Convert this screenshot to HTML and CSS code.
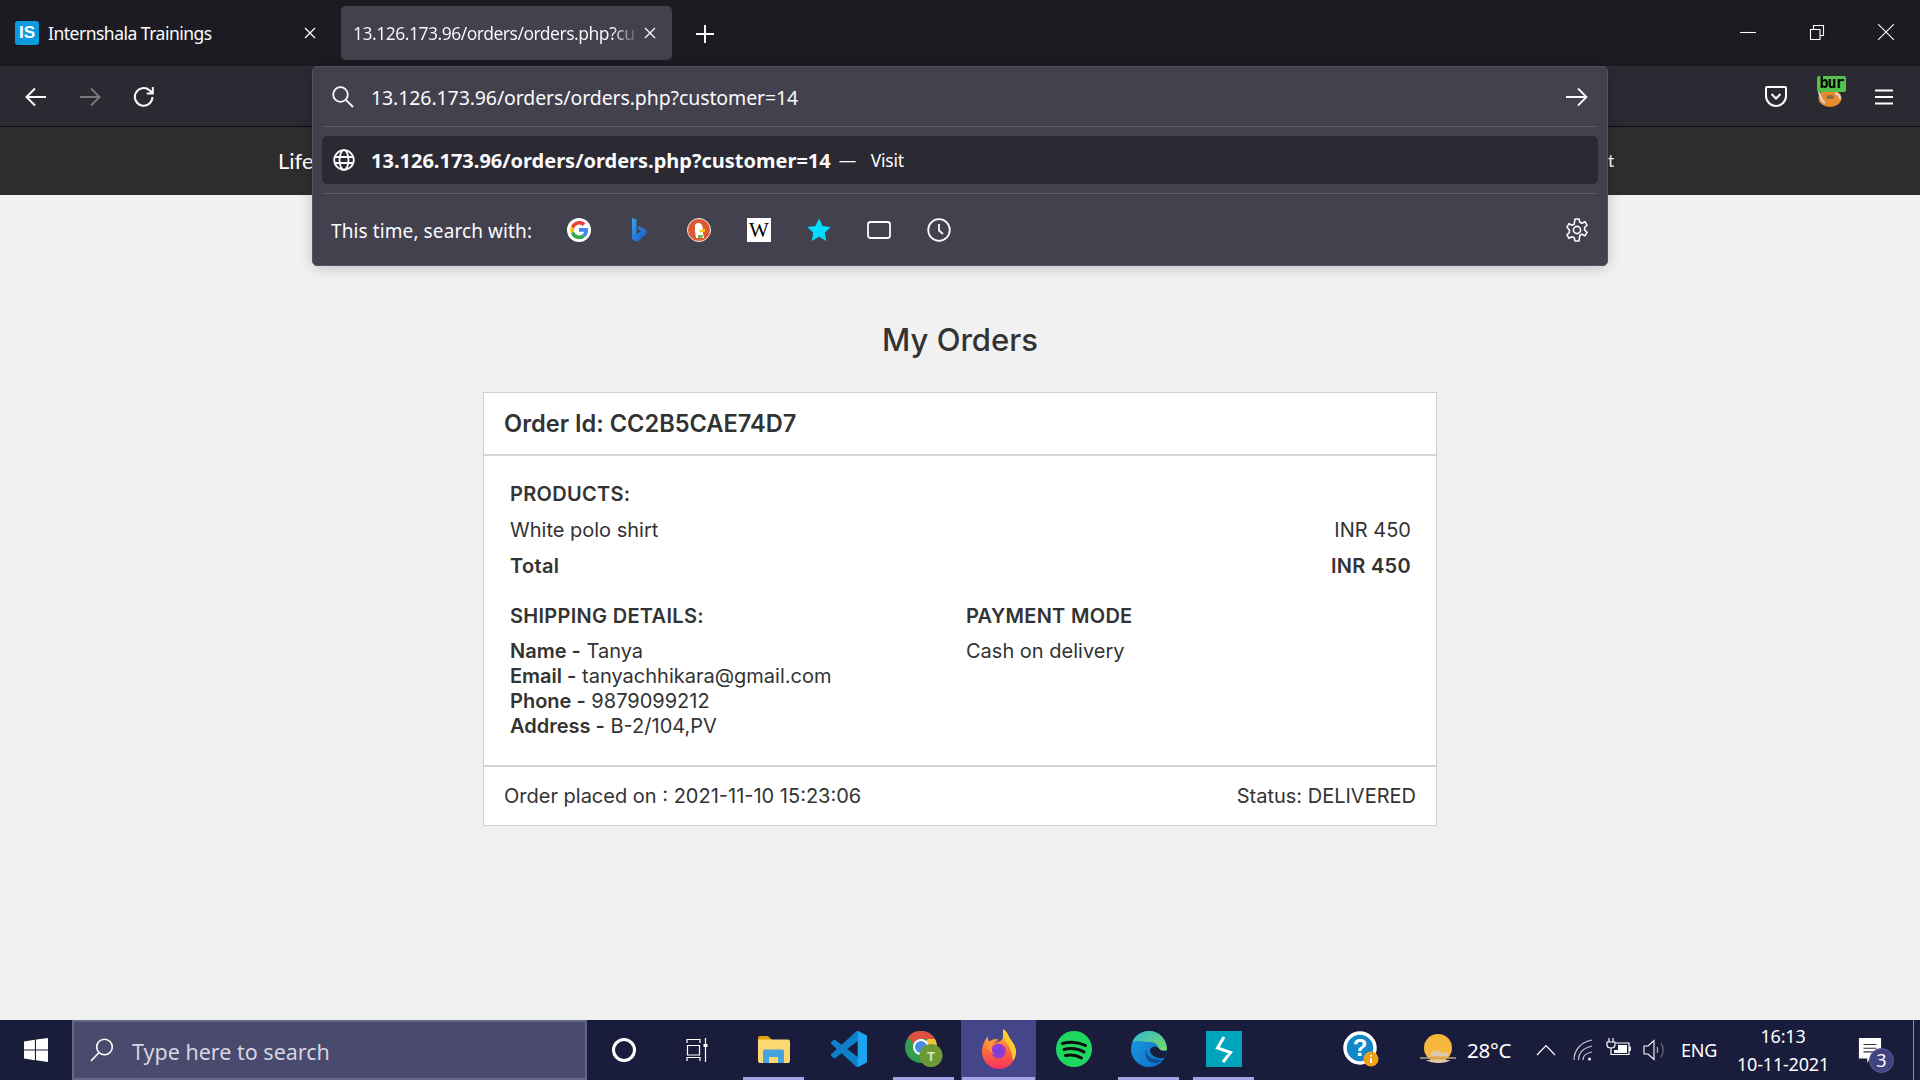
FILE: index.html
```html
<!DOCTYPE html>
<html lang="en">
<head>
<meta charset="utf-8">
<title>My Orders</title>
<link rel="stylesheet" href="styles.css">
</head>
<body>
<div class="screen">
  <div class="tabbar">
    <div class="tab">
      <span class="is-logo">IS</span>
      <span class="tab-title">Internshala Trainings</span>
      <svg class="tab-x" viewBox="0 0 12 12"><path d="M1 1l10 10M11 1L1 11"/></svg>
    </div>
    <div class="tab tab-active">
      <span class="tab-title tab-fade">13.126.173.96/orders/orders.php?cu</span>
      <svg class="tab-x" viewBox="0 0 12 12"><path d="M1 1l10 10M11 1L1 11"/></svg>
    </div>
    <svg class="new-tab" viewBox="0 0 18 18"><path d="M9 0v18M0 9h18"/></svg>
    <div class="win-controls">
      <svg class="win-btn" viewBox="0 0 16 16"><path d="M0 8.500h16"/></svg>
      <svg class="win-btn" viewBox="0 0 16 16"><path d="M1.500 5.500h9.500v10H1.500zM4.500 5.500V1.500h10v10H11"/></svg>
      <svg class="win-btn" viewBox="0 0 16 16"><path d="M0 0l16 16M16 0L0 16"/></svg>
    </div>
  </div>

  <div class="toolbar">
    <div class="nav-group">
      <svg class="tool-icon" viewBox="0 0 22 22"><path d="M21 11H2M10 2.500 1.500 11l8.500 8.500"/></svg>
      <svg class="tool-icon tool-dim" viewBox="0 0 22 22"><path d="M1 11h19M12 2.500l8.500 8.500-8.500 8.500"/></svg>
      <svg class="tool-icon" viewBox="0 0 22 22"><path d="M19.500 11a8.800 8.800 0 1 1-3-6.700L19.500 7M19.800 1V7.500h-6"/></svg>
    </div>
    <div class="tool-right">
      <svg class="pocket" viewBox="0 0 22 24"><path d="M2 2h18a1 1 0 0 1 1 1v8a10 10 0 0 1-20 0V3a1 1 0 0 1 1-1z"/><path d="M6.500 9l4.500 4.500L15.500 9"/></svg>
      <div class="burp">
        <svg class="burp-fox" viewBox="0 0 24 16"><ellipse cx="12" cy="7" rx="11.500" ry="9" fill="#e98a2e"/><path d="M1 1c1 5 3 9 6 11M17 2c3 1 5 3 5 6" stroke="#d8d8d8" stroke-width="2" fill="none"/><ellipse cx="12" cy="6" rx="4" ry="2" fill="#8a6a4a"/></svg>
        <span class="burp-tag">bur</span>
      </div>
      <svg class="menu-icon" viewBox="0 0 18 16"><path d="M0 1.500h18M0 8h18M0 14.500h18"/></svg>
    </div>
  </div>

  <div class="site-header"><span class="site-link">Life</span><span class="site-link site-link-end">t</span></div>

  <main class="page">
    <h1 class="page-title">My Orders</h1>
    <section class="card">
      <header class="card-head">Order Id: CC2B5CAE74D7</header>
      <div class="card-body">
        <div class="line strong"><span>PRODUCTS:</span></div>
        <div class="line"><span>White polo shirt</span><span>INR 450</span></div>
        <div class="line strong"><span>Total</span><span>INR 450</span></div>
        <div class="details">
          <div>
            <div class="line strong">SHIPPING DETAILS:</div>
            <div class="address">
              <div><b>Name -</b> Tanya</div>
              <div><b>Email -</b> tanyachhikara@gmail.com</div>
              <div><b>Phone -</b> 9879099212</div>
              <div><b>Address -</b> B-2/104,PV</div>
            </div>
          </div>
          <div>
            <div class="line strong">PAYMENT MODE</div>
            <div class="address">Cash on delivery</div>
          </div>
        </div>
      </div>
      <footer class="card-foot"><span>Order placed on : 2021-11-10 15:23:06</span><span>Status: DELIVERED</span></footer>
    </section>
  </main>

  <div class="taskbar">
    <div class="start">
      <svg class="win-logo" viewBox="0 0 24 24"><path d="M0 3.400l10.900-1.600v9.700H0zM12 1.600L24 0v11.500H12zM0 12.500h10.900v9.700L0 20.600zM12 12.500h12V24l-12-1.700z"/></svg>
    </div>
    <div class="search">
      <svg class="search-glass" viewBox="0 0 24 24"><circle cx="14.500" cy="9" r="7.800"/><path d="M9 14.500 1 23"/></svg>
      <span>Type here to search</span>
    </div>
    <div class="slot slot-cortana"><span class="cortana"></span></div>
    <div class="slot slot-view">
      <svg class="taskview" viewBox="0 0 26 24"><path d="M1 5V1.500h13V5M1.500 7.500h12v9.500h-12zM1 23v-3.500h13V23M19.500 0v24"/><path class="tv-dot" d="M17.500 6h4v3h-4z"/></svg>
    </div>

    <div class="slot pinned on">
      <svg class="app-folder" viewBox="0 0 32 27"><path d="M0 2a2 2 0 0 1 2-2h8l4 4H0z" fill="#e0a008"/><path d="M0 3.500h30a2 2 0 0 1 2 2V25a2 2 0 0 1-2 2H2a2 2 0 0 1-2-2z" fill="#fbd872"/><path d="M5 27V15a1.500 1.500 0 0 1 1.500-1.500h18A1.500 1.500 0 0 1 26 15v12h-6v-6h-9v6z" fill="#45a3de"/></svg>
    </div>
    <div class="slot pinned">
      <svg class="app" viewBox="0 0 24 24"><path d="M23.150 2.587L18.210.21a1.494 1.494 0 0 0-1.705.29l-9.460 8.630-4.120-3.128a.999.999 0 0 0-1.276.057L.327 7.261A1 1 0 0 0 .326 8.740L3.899 12 .326 15.260a1 1 0 0 0 .001 1.479L1.650 17.940a.999.999 0 0 0 1.276.057l4.120-3.128 9.460 8.630a1.492 1.492 0 0 0 1.704.290l4.942-2.377A1.500 1.500 0 0 0 24 20.060V3.939a1.500 1.500 0 0 0-.850-1.352zm-5.146 14.861L10.826 12l7.178-5.448v10.896z" fill="#0f80cc"/><path d="M18.210.21 23.150 2.587A1.500 1.500 0 0 1 24 3.939V20.060a1.500 1.500 0 0 1-.850 1.352l-4.940 2.377a1.500 1.500 0 0 1-1.700-.29c.6.3 1.300 0 1.300-.9V1c0-.9-.7-1.200-1.300-.5a1.500 1.500 0 0 1 1.700-.29z" fill="#20a4f0"/></svg>
    </div>
    <div class="slot pinned on">
      <svg class="app-chrome" viewBox="0 0 38 36"><circle cx="16" cy="16" r="16" fill="#2f9e50"/><path d="M16 0a16 16 0 0 1 14 8H16a8 8 0 0 0-7.500 5L3 6a16 16 0 0 1 13-6z" fill="#de5140"/><path d="M30 8a16 16 0 0 1-7 22l-7-14 7-8z" fill="#f5c33b"/><circle cx="16" cy="16" r="8" fill="#fff"/><circle cx="16" cy="16" r="6" fill="#4a8be8"/><circle cx="26" cy="24.500" r="11.500" fill="#6d9a35"/><text class="chrome-t" x="26" y="29.500">T</text></svg>
    </div>
    <div class="slot pinned on active">
      <svg class="app-fox" viewBox="0 0 36 42">
        <defs>
          <linearGradient id="fx" x1="0" y1="0" x2="0" y2="1"><stop offset="0" stop-color="#ffc93b"/><stop offset=".5" stop-color="#ff7139"/><stop offset="1" stop-color="#f5305f"/></linearGradient>
          <radialGradient id="fxc"><stop offset="0" stop-color="#6a3fe0"/><stop offset="1" stop-color="#a83bc8"/></radialGradient>
        </defs>
        <path d="M22 1c5 4 4 7 7 10 4 4 6 9 6 13a17 17 0 0 1-34 0C1 18 3 13 7 8c-.5 3 .5 5 2 6 2-3 6-4 9-2-2 0-4 1-5 3 6-1 9-3 9-7 0-3 0-5 0-7z" fill="url(#fx)"/>
        <circle cx="17.500" cy="23" r="7.500" fill="url(#fxc)"/>
        <path d="M6 15c3-3 8-4 12-2-3 0-6 1-7 5-1 3 0 6 2 8-4-1-7-6-7-11z" fill="#ff9640"/>
        <path d="M22 1c6 4 5 7 8 11 3 4 5 8 5 12 0 3-1 6-3 9-1-8-3-14-7-19-3-4-3-9-3-13z" fill="#ffcb2f"/>
      </svg>
    </div>
    <div class="slot pinned">
      <svg class="app" viewBox="0 0 36 36"><circle cx="18" cy="18" r="18" fill="#1ed760"/><path d="M6.500 12.500c7-2 16-1.500 23 2M8 18.500c6-1.500 14-1 20 2.500M9.500 24.500c5-1 11-.5 16 2.500" stroke="#0d0d0d" stroke-width="3" stroke-linecap="round" fill="none"/></svg>
    </div>
    <div class="slot pinned on">
      <svg class="app" viewBox="0 0 36 36">
        <defs>
          <linearGradient id="eg" x1="0" y1="0" x2="1" y2="1"><stop offset="0" stop-color="#2db8d8"/><stop offset="1" stop-color="#7bdc5c"/></linearGradient>
          <linearGradient id="eb" x1="0" y1="0" x2="1" y2="1"><stop offset="0" stop-color="#1b9de2"/><stop offset="1" stop-color="#0c6cc0"/></linearGradient>
        </defs>
        <circle cx="18" cy="18" r="18" fill="url(#eb)"/>
        <path d="M1.500 11C4 4 11 0 18 0c10 0 18 8 18 19-2 1-6 1-8-1-1-5-5-7-9-7-7 0-13-2-17.500 0z" fill="url(#eg)"/>
        <path d="M36 19.500c-4 1-7 0-8-2-3-3-9-2-9 2 0 3 3 6 7 7 3 1 6 1 8 0z" fill="#1a1c3c"/>
        <path d="M31 30c-5 3-12 3-15-2-2-3-2-7-1-10 0 5 3 9 8 10 3 .5 6 .5 8 2z" fill="#0b4f98"/>
      </svg>
    </div>
    <div class="slot pinned on">
      <svg class="bolt-box" viewBox="0 0 36 36"><path d="M18 6l-6.500 11 13 4.500L17 31"/></svg>
    </div>

    <div class="tray">
      <div class="help"><svg viewBox="0 0 36 38"><circle cx="17" cy="17" r="15" fill="#1186c9" stroke="#fff" stroke-width="3.500"/><text class="help-q" x="17" y="25">?</text><circle cx="28" cy="28" r="7.500" fill="#f0a116"/><path d="M28 24v1.500M28 27v5" stroke="#fff" stroke-width="2"/></svg></div>
      <div class="weather"><svg viewBox="0 0 36 34"><circle cx="18" cy="15" r="14" fill="#f6b73c"/><path d="M0 25h36" stroke="#b9a38a" stroke-width="1.500"/><path d="M10 23c1-5 8-7 12-3 3-2 7 0 7 3zM6 27h24c-3 4-19 4-24 0z" fill="#dcc8ae"/></svg></div>
      <span class="temp">28°C</span>
      <svg class="chev" viewBox="0 0 20 12"><path d="M1 11l9-9.500L19 11"/></svg>
      <svg class="wifi" viewBox="0 0 20 22"><path d="M1 21C1 11 8 3 19 1M5.500 21c0-7 5-12 13.500-14M10 21c0-4 3-7 9-8"/><circle cx="16.500" cy="20" r="1.500" fill="#fff" stroke="none"/></svg>
      <svg class="batt" viewBox="0 0 26 18"><path d="M4 0v4M8 0v4M2 4h8v3c0 2-2 3-4 3S2 9 2 7zM6 10v6.500h18V5H11M25.200 8.500v4.500"/><path class="batt-fill" d="M9 12h13v3H9zM13 7h9v5h-9z"/></svg>
      <svg class="speaker" viewBox="0 0 24 22"><path d="M1 7h4l6-5.500v19L5 15H1z"/><path class="faint" d="M14 8c1 2 1 4 0 6"/><path class="fainter" d="M18 4c3 4 3 10 0 14"/></svg>
      <span class="lang">ENG</span>
      <div class="clock"><span>16:13</span><span>10-11-2021</span></div>
      <div class="notif">
        <svg viewBox="0 0 26 30"><path d="M1 1h24v22H13l-3 5v-5H1z" fill="#fff"/><path d="M6 8h14M6 12h14M6 16h10" stroke="#333" stroke-width="1.200"/></svg>
        <span class="notif-badge">3</span>
      </div>
      <span class="show-desktop"></span>
    </div>
  </div>

  <div class="urlbar">
    <div class="url-input">
      <svg class="pop-icon" viewBox="0 0 22 22"><circle cx="8.500" cy="8.500" r="7.300"/><path d="M14 14l7 7"/></svg>
      <span class="url-text">13.126.173.96/orders/orders.php?customer=14</span>
      <svg class="pop-icon" viewBox="0 0 22 22"><path d="M0 11h20M12 2.500l8.500 8.500-8.500 8.500"/></svg>
    </div>
    <div class="url-result">
      <svg class="pop-icon" viewBox="0 0 22 22"><circle cx="11" cy="11" r="9.800"/><ellipse cx="11" cy="11" rx="4.500" ry="9.800"/><path d="M1.500 8h19M1.500 14h19"/></svg>
      <b class="url-text">13.126.173.96/orders/orders.php?customer=14</b>
      <span class="url-visit">— &nbsp;Visit</span>
    </div>
    <div class="url-engines">
      <span class="engine-label">This time, search with:</span>
      <div class="engine-list">
        <span class="engine"><svg viewBox="0 0 24 24"><circle cx="12" cy="12" r="12" fill="#fff"/><path d="M12 6.500a5.500 5.500 0 0 1 3.700 1.400l2.700-2.700A9.300 9.300 0 0 0 4 8.200l3.200 2.500A5.500 5.500 0 0 1 12 6.500z" fill="#ea4335"/><path d="M7 13.500a5.500 5.500 0 0 1 .2-2.800L4 8.200a9.500 9.500 0 0 0 0 7.600z" fill="#fbbc05"/><path d="M12 21.300a9 9 0 0 0 6.200-2.300l-3-2.400a5.500 5.500 0 0 1-8.200-3.100L4 15.800a9.300 9.300 0 0 0 8 5.500z" fill="#34a853"/><path d="M21 12c0-.7 0-1.300-.2-2H12v3.800h5.200a4.500 4.500 0 0 1-2 2.800l3 2.400A9 9 0 0 0 21 12z" fill="#4285f4"/></svg></span>
        <span class="engine"><svg viewBox="0 0 24 24"><defs><linearGradient id="bg" x1="0" y1="0" x2="1" y2="1"><stop offset="0" stop-color="#36a4e8"/><stop offset="1" stop-color="#1c53c6"/></linearGradient></defs><path d="M5 0l4.500 1.500v14.500l5-3-3-1.500-1-3.500 9 3.500v4.500L10 24l-5-3z" fill="url(#bg)"/></svg></span>
        <span class="engine"><svg viewBox="0 0 24 24"><circle cx="12" cy="12" r="11.500" fill="#de5833" stroke="#eee" stroke-width="1"/><path d="M8 7c2-3 6-2 7 0 1 3 1 6 1 8l1 5H9L8 13z" fill="#fff"/><path d="M12 12l6-1v2.500l-5 1z" fill="#fdd209"/><path d="M11 17l5 0-1 3h-4z" fill="#65bc46"/></svg></span>
        <span class="engine"><span class="wiki">W</span></span>
        <span class="engine"><svg viewBox="0 0 24 24"><path d="M12 .500l3.500 7.600 8.300 1-6.100 5.600 1.600 8.200-7.300-4.100-7.300 4.100 1.600-8.200L.2 9.100l8.300-1z" fill="#00ddff"/></svg></span>
        <span class="engine"><svg class="line-svg" viewBox="0 0 24 24"><rect x="1" y="4" width="22" height="16" rx="2.500"/></svg></span>
        <span class="engine"><svg class="line-svg" viewBox="0 0 24 24"><circle cx="12" cy="12" r="10.800"/><path d="M12 6v6.500l4 3.500"/></svg></span>
      </div>
      <svg class="gear" viewBox="0 0 24 24"><path d="M10 1h4l.8 3.200 2.200 1 3-1.500 2 3.500-2.400 2.300v2.500l2.400 2.300-2 3.500-3-1.500-2.200 1L14 23h-4l-.8-3.200-2.200-1-3 1.500-2-3.500 2.400-2.300V12L2 9.200l2-3.500 3 1.500 2.200-1z"/><circle cx="12" cy="12" r="3.600"/></svg>
    </div>
  </div>
</div>
</body>
</html>
```
FILE: styles.css
```css
* { box-sizing: border-box; }
html, body { margin: 0; height: 100%; }
body { font-family: "Noto Sans", sans-serif; background: #f1f1f1; }
svg { display: block; flex: none; }

.screen { position: relative; width: 1920px; height: 1080px; display: flex; flex-direction: column; overflow: hidden; }

/* tab strip */
.tabbar { height: 66px; background: #1c1b22; display: flex; align-items: flex-start; padding-top: 6px; color: #fbfbfe; flex: none; }
.tab { height: 54px; display: flex; align-items: center; font-size: 17.500px; letter-spacing: -.5px; position: relative; }
.tab:first-child { width: 341px; padding: 0 25px 0 15px; }
.tab-active { width: 331px; background: #42414d; border-radius: 5px; padding: 0 17px 0 12px; }
.is-logo { width: 24px; height: 24px; border-radius: 3px; background: #0a9bdf; color: #fff; font: 700 17px/24px "Liberation Sans", sans-serif; text-align: center; margin-right: 9px; flex: none; letter-spacing: 0; }
.tab-title { flex: 1; white-space: nowrap; overflow: hidden; }
.tab-fade { color: transparent; background: linear-gradient(90deg, #fbfbfe 92%, #6b6a75 100%); -webkit-background-clip: text; background-clip: text; flex: none; margin-right: 10px; }
.tab-x { width: 12px; height: 12px; stroke: #fbfbfe; stroke-width: 1.300; fill: none; }
.new-tab { width: 18px; height: 18px; stroke: #fbfbfe; stroke-width: 2; margin: 19px 0 0 24px; }
.win-controls { margin-left: auto; display: flex; gap: 53px; padding: 18px 26px 0 0; }
.win-btn { width: 16px; height: 16px; stroke: #fff; stroke-width: 1.100; fill: none; }

/* toolbar */
.toolbar { height: 61px; background: #2b2a33; border-bottom: 1px solid #0c0c0d; display: flex; align-items: center; justify-content: space-between; padding: 2px 27px 0 25px; flex: none; }
.nav-group { display: flex; gap: 32px; }
.tool-icon { width: 22px; height: 22px; stroke: #fbfbfe; stroke-width: 2; fill: none; }
.tool-dim { stroke: #77767c; }
.tool-right { display: flex; align-items: center; }
.pocket { width: 22px; height: 24px; stroke: #fbfbfe; stroke-width: 2; fill: none; margin-right: 30px; }
.burp { position: relative; width: 28px; height: 40px; margin-right: 30px; }
.burp-fox { position: absolute; left: 1px; top: 14px; width: 24px; height: 16px; }
.burp-tag { position: absolute; left: 0; top: -1px; width: 29px; height: 16px; background: #56c04e; border-radius: 2px; color: #000; font: 700 15px/15px "DejaVu Sans Mono", monospace; text-align: center; letter-spacing: -1px; }
.menu-icon { width: 18px; height: 16px; stroke: #fbfbfe; stroke-width: 2; }

/* site header */
.site-header { height: 68px; background: #2d2d2d; color: #fff; display: flex; align-items: center; justify-content: space-between; padding: 0 306px 2px 278px; font: 400 22px "Lato", sans-serif; flex: none; }
.site-link-end { font-size: 17px; }

/* page */
.page { flex: 1; padding-top: 124px; color: #333; font-family: "Inter", sans-serif; min-height: 0; }
.page-title { margin: 0 0 31px; text-align: center; font-size: 31px; line-height: 42px; font-weight: 500; color: #333; }
.card { width: 954px; height: 434px; margin: 0 auto; background: #fff; border: 1.500px solid #cfcfcf; display: flex; flex-direction: column; font-size: 20px; }
.card-head { height: 63px; border-bottom: 2px solid #d4d4d4; padding-left: 20px; display: flex; align-items: center; font-size: 23.600px; font-weight: 600; }
.card-body { flex: 1; padding: 20px 25px 0 26px; }
.line { height: 36px; display: flex; align-items: center; justify-content: space-between; }
.strong { font-weight: 600; letter-spacing: .3px; }
.address b { font-weight: 600; }
.details { display: grid; grid-template-columns: 456px 1fr; margin-top: 14px; }
.address { line-height: 25px; margin-top: 5px; }
.card-foot { height: 60px; border-top: 2px solid #d4d4d4; padding: 0 20px; display: flex; align-items: center; justify-content: space-between; }

/* taskbar */
.taskbar { height: 60px; background: #1a1c3c; display: flex; flex: none; color: #fff; font-family: "Noto Sans", sans-serif; }
.start { width: 72px; display: flex; align-items: center; justify-content: center; }
.win-logo { width: 24px; height: 24px; fill: #fff; }
.search { width: 515px; background: #4a4a6e; border: 2px solid #66668a; display: flex; align-items: center; padding: 3px 0 0 16px; font-size: 21.500px; color: #d6d6e2; }
.search-glass { width: 24px; height: 24px; stroke: #fff; stroke-width: 1.600; fill: none; margin: -3px 18px 0 0; }
.slot { display: flex; align-items: center; justify-content: center; position: relative; height: 60px; }
.slot-cortana { width: 74px; }
.slot-view { width: 75px; }
.cortana { width: 24px; height: 24px; border-radius: 50%; border: 3px solid #fff; }
.taskview { width: 26px; height: 24px; stroke: #fff; stroke-width: 1.200; fill: none; }
.tv-dot { fill: #fff; stroke: none; }
.pinned { width: 75px; padding-bottom: 2px; }
.pinned.on::after { content: ""; position: absolute; left: 7px; right: 7px; bottom: 0; height: 3px; background: #a3a3e6; }
.active { background: #45458a; }
.pinned.active::after { left: 1px; right: 1px; }
.app { width: 36px; height: 36px; }
.app-folder { width: 32px; height: 27px; }
.app-chrome { width: 38px; height: 36px; }
.app-fox { width: 36px; height: 42px; }
.chrome-t { font: 700 13px "Liberation Sans", sans-serif; fill: #d9e8c0; text-anchor: middle; }
.bolt-box { width: 36px; height: 36px; background: #00a5bd; stroke: #fff; stroke-width: 3; fill: none; }
.tray { margin-left: auto; display: flex; align-items: center; }
.help { width: 36px; height: 38px; margin-right: 41px; }
.help svg { width: 36px; height: 38px; }
.help-q { font: 700 24px "Liberation Sans", sans-serif; fill: #fff; text-anchor: middle; }
.weather { width: 36px; height: 34px; margin-right: 11px; }
.weather svg { width: 36px; height: 34px; }
.temp { font-size: 20.500px; letter-spacing: -.3px; margin-right: 25px; }
.chev { width: 20px; height: 12px; stroke: #fff; stroke-width: 1.200; fill: none; margin-right: 17px; }
.wifi { width: 20px; height: 22px; stroke: #c9c9d2; stroke-width: 1.200; fill: none; margin-right: 12px; }
.batt { width: 26px; height: 18px; stroke: #fff; stroke-width: 1.200; fill: none; margin: -6px 12px 0 0; }
.batt-fill { fill: #fff; stroke: none; }
.speaker { width: 24px; height: 22px; stroke: #fff; stroke-width: 1.100; fill: none; margin-right: 14px; }
.faint { stroke: #bbb; }
.fainter { stroke: #777; }
.lang { font-size: 18px; letter-spacing: -.3px; margin-right: 18px; }
.clock { display: flex; flex-direction: column; align-items: center; gap: 5px; font-size: 18px; line-height: 23px; width: 96px; margin-right: 27px; letter-spacing: -.2px; }
.notif { position: relative; width: 24px; height: 28px; margin-top: 2px; margin-right: 31px; }
.notif svg { width: 24px; height: 28px; }
.notif-badge { position: absolute; left: 11px; top: 11px; width: 25px; height: 25px; border-radius: 50%; background: #43437f; font-size: 18px; line-height: 23px; text-align: center; border: 1px solid #5c5c96; }
.show-desktop { width: 1px; height: 60px; background: #8a8a9c; margin-right: 6px; }

/* address bar popup */
.urlbar { position: absolute; left: 312px; top: 66px; width: 1296px; height: 200px; background: #42414d; border: 1px solid #52515e; border-radius: 5px; box-shadow: 0 2px 14px rgba(0,0,0,.2); color: #fbfbfe; display: flex; flex-direction: column; }
.pop-icon { width: 22px; height: 22px; stroke: #fbfbfe; stroke-width: 1.800; fill: none; }
.url-input { height: 60px; display: flex; align-items: center; padding: 0 19px; position: relative; }
.url-input::after { content: ""; position: absolute; left: 9px; right: 9px; bottom: 0; height: 1px; background: #5a5965; }
.url-text { font-size: 19.500px; margin-left: 17px; flex: none; letter-spacing: -.1px; }
.url-input .url-text { flex: 1; }
.url-result { height: 48px; margin: 9px; background: #2b2a33; border-radius: 5px; display: flex; align-items: center; padding-left: 11px; }
.url-result .url-text { font-weight: 700; font-size: 20px; letter-spacing: 0; margin-left: 16px; }
.url-visit { font-size: 17.500px; margin-left: 8px; letter-spacing: -.2px; word-spacing: 3px; }
.url-engines { flex: 1; margin: 0 9px; border-top: 1px solid #5a5965; display: flex; align-items: center; padding: 0 9px; }
.engine-label { font-size: 19px; width: 218px; letter-spacing: .1px; white-space: nowrap; padding-top: 2px; }
.engine-list { display: flex; flex: 1; }
.engine { width: 60px; display: flex; justify-content: center; align-items: center; }
.engine svg { width: 24px; height: 24px; }
.wiki { width: 24px; height: 24px; background: #fff; color: #000; font: 400 21px/25px "Liberation Serif", serif; text-align: center; }
.line-svg { stroke: #fbfbfe; stroke-width: 1.800; fill: none; }
.gear { width: 24px; height: 24px; stroke: #fbfbfe; stroke-width: 1.600; fill: none; stroke-linejoin: round; }
```
